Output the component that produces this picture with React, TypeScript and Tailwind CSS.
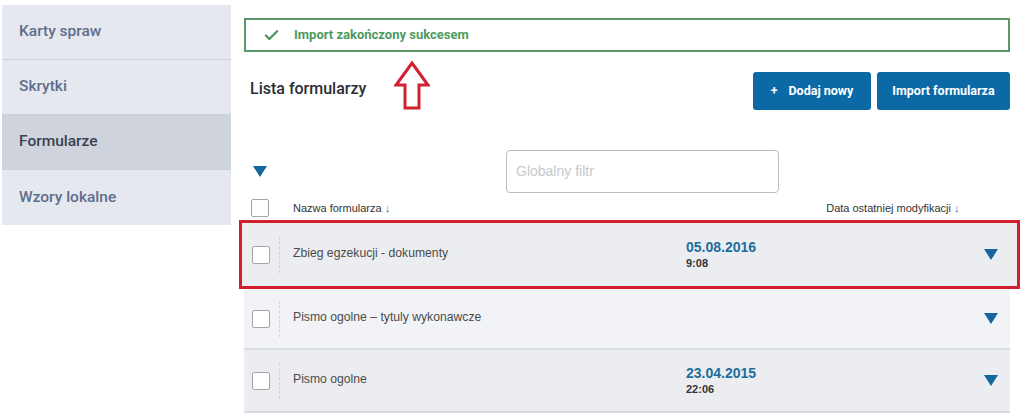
import { Check } from 'lucide-react';

const navItems = [
  { label: 'Karty spraw', active: false },
  { label: 'Skrytki', active: false },
  { label: 'Formularze', active: true },
  { label: 'Wzory lokalne', active: false },
];

interface FormRow {
  name: string;
  date?: string;
  time?: string;
  highlighted?: boolean;
  bg: string;
  height: string;
}

const rows: FormRow[] = [
  { name: 'Zbieg egzekucji - dokumenty', date: '05.08.2016', time: '9:08', highlighted: true, bg: 'bg-[#ecedf0]', height: 'h-[69px]' },
  { name: 'Pismo ogolne – tytuly wykonawcze', bg: 'bg-[#f1f3f7]', height: 'h-[61px]' },
  { name: 'Pismo ogolne', date: '23.04.2015', time: '22:06', bg: 'bg-[#ebedf0]', height: 'h-[63px]' },
];

function Triangle({ className = '' }: { className?: string }) {
  return (
    <svg width="14" height="11" viewBox="0 0 14 11" className={className}>
      <polygon points="0,0 14,0 7,11" fill="#12679f" />
    </svg>
  );
}

function Box() {
  return <div className="h-[18px] w-[18px] rounded-[2px] border border-[#a3a6ab] bg-white" />;
}

function Row({ row }: { row: FormRow }) {
  return (
    <div className={`flex h-full items-center ${row.bg}`}>
      <div className="flex w-[35px] shrink-0 pl-[8px]">
        <Box />
      </div>
      <div className="h-[36px] border-l border-dashed border-[#cfd2d8]" />
      <div className="-mt-[3px] w-[406px] shrink-0 pl-[13px] text-[12.2px] text-[#4a4a4a]">{row.name}</div>
      <div className="flex flex-col leading-none">
        {row.date ? (
          <>
            <span className="text-[14px] font-bold text-[#1d6e9c]">{row.date}</span>
            <span className="mt-[4px] text-[11px] font-bold text-[#333]">{row.time}</span>
          </>
        ) : null}
      </div>
      <Triangle className="ml-auto mr-[12px]" />
    </div>
  );
}

export default function App() {
  return (
    <div className="relative flex h-[420px] w-[1024px] overflow-hidden bg-white" style={{ fontFamily: 'Roboto, sans-serif' }}>
      <nav className="ml-[2px] mt-[5px] w-[229px] self-start">
        {navItems.map((item, i) => (
          <div
            key={item.label}
            className={`flex h-[55px] items-center pl-[17px] text-[15.5px] font-medium ${i < navItems.length - 1 ? 'border-b border-[#cbd0d9]' : ''} ${item.active ? 'bg-[#ced3dc] text-[#3a4150]' : 'bg-[#e5e8ef] text-[#5f6d8c]'}`}
          >
            {item.label}
          </div>
        ))}
      </nav>

      <main className="ml-[13px] w-[766px] pt-[18px]">
        <div className="flex h-[34px] items-center border-2 border-[#5b9668] pl-[17px] text-[13px] font-bold text-[#4e9a5e]">
          <Check size={17} strokeWidth={3} className="text-[#4b8f5c]" />
          <span className="ml-[14px]">Import zakończony sukcesem</span>
        </div>

        <div className="mt-[20px] flex items-start">
          <h1 className="ml-[6px] mt-[5px] text-[16px] font-medium text-[#2a2d33]">Lista formularzy</h1>
          <div className="ml-auto flex gap-[6px]">
            <button className="flex h-[38px] w-[118px] items-center justify-center rounded-[3px] bg-[#0b6aa6] text-[12.5px] font-bold text-white">
              <span className="mr-[11px]">+</span>Dodaj nowy
            </button>
            <button className="flex h-[38px] w-[133px] items-center justify-center rounded-[3px] bg-[#0b6aa6] text-[12.5px] font-bold text-white">
              Import formularza
            </button>
          </div>
        </div>

        <div className="mt-[40px] flex items-center">
          <Triangle className="ml-[9px]" />
          <div className="ml-[239px] flex h-[43px] w-[273px] items-center rounded-[4px] border border-[#b9bcc1] pl-[9px] text-[14px] text-[#c6c9ce]" style={{ fontFamily: '"Liberation Sans", Arial, sans-serif' }}>
            Globalny filtr
          </div>
        </div>

        <div className="mt-[6px] flex h-[18px] items-center text-[11px] text-[#333]" style={{ fontFamily: '"Liberation Sans", Arial, sans-serif' }}>
          <div className="ml-[7px]"><Box /></div>
          <span className="ml-[24px]">Nazwa formularza <span className="text-[#1d6e9c]">↓</span></span>
          <span className="ml-[436px]">Data ostatniej modyfikacji <span className="text-[#1d6e9c]">↓</span></span>
        </div>

        <div className="mt-[3px] flex flex-col" style={{ fontFamily: '"Liberation Sans", Arial, sans-serif' }}>
          {rows.map((row) =>
            row.highlighted ? (
              <div key={row.name} className={`-ml-[5px] -mr-[10px] ${row.height} border-[3px] border-[#d21f2e] bg-[#ecedf0] pl-[2px] pr-[7px]`}>
                <Row row={row} />
              </div>
            ) : (
              <div key={row.name} className={`${row.height} border-b-2 border-[#d9dce2]`}>
                <Row row={row} />
              </div>
            )
          )}
        </div>
      </main>

      <svg className="absolute left-[394px] top-[61px]" width="36" height="49" viewBox="0 0 36 49">
        <polygon points="18,2 34,24 25,24 25,47 11,47 11,24 2,24" fill="white" stroke="#d3202f" strokeWidth="3" strokeLinejoin="miter" />
      </svg>
    </div>
  );
}
